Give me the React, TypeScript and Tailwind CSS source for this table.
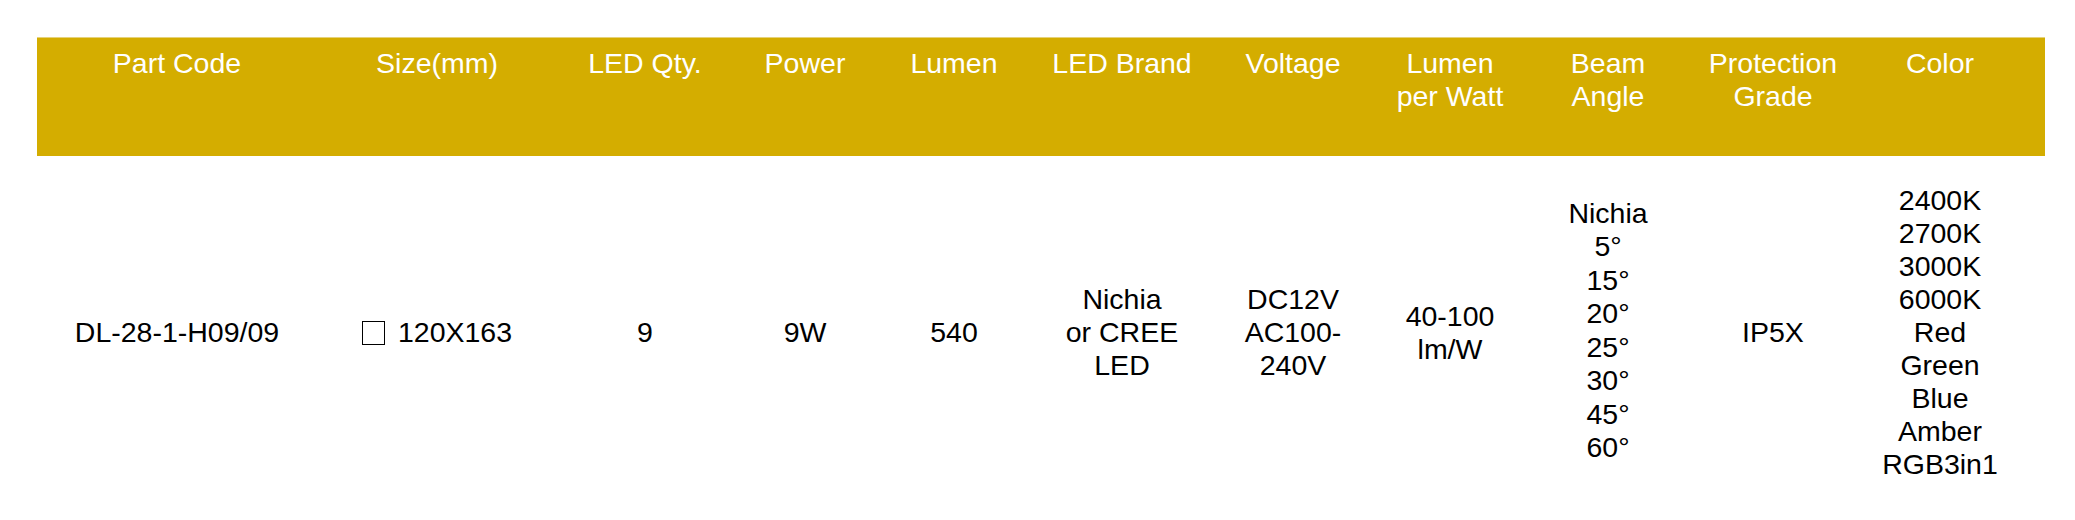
const columns = [
  ['Part Code'],
  ['Size(mm)'],
  ['LED Qty.'],
  ['Power'],
  ['Lumen'],
  ['LED Brand'],
  ['Voltage'],
  ['Lumen', 'per Watt'],
  ['Beam', 'Angle'],
  ['Protection', 'Grade'],
  ['Color'],
]

const row: string[][] = [
  ['DL-28-1-H09/09'],
  [],
  ['9'],
  ['9W'],
  ['540'],
  ['Nichia', 'or CREE', 'LED'],
  ['DC12V', 'AC100-', '240V'],
  ['40-100', 'lm/W'],
  ['Nichia', '5°', '15°', '20°', '25°', '30°', '45°', '60°'],
  ['IP5X'],
  ['2400K', '2700K', '3000K', '6000K', 'Red', 'Green', 'Blue', 'Amber', 'RGB3in1'],
]

const grid =
  'grid grid-cols-[280px_240px_176px_144px_154px_182px_160px_154px_162px_168px_166px]'

export default function App() {
  return (
    <div className="w-[2075px] h-[520px] bg-white pt-[37px] pl-[37px] font-['Liberation_Sans',Arial,sans-serif] text-[28.5px] leading-[33px]">
      <div className="w-[2008px]">
        {/* header */}
        <div className={`${grid} h-[119px] bg-[#d4ad00] border-t border-[#e6d27a] pt-[9px] text-white`}>
          {columns.map((lines, i) => (
            <div key={i} className="flex flex-col items-center text-center">
              {lines.map((l) => (
                <span key={l}>{l}</span>
              ))}
            </div>
          ))}
        </div>

        {/* data row */}
        <div className={`${grid} items-center py-[28px] text-black`}>
          {row.map((lines, i) =>
            i === 1 ? (
              <div key={i} className="flex items-center justify-center">
                <span className="inline-block w-[23px] h-[24px] border border-black mr-[13px]"></span>
                <span>120X163</span>
              </div>
            ) : (
              <div
                key={i}
                className={`flex flex-col items-center text-center ${i === 8 ? 'leading-[33.5px] mb-[4px]' : ''}`}
              >
                {lines.map((l, j) => (
                  <span key={j}>{l}</span>
                ))}
              </div>
            )
          )}
        </div>
      </div>
    </div>
  )
}
